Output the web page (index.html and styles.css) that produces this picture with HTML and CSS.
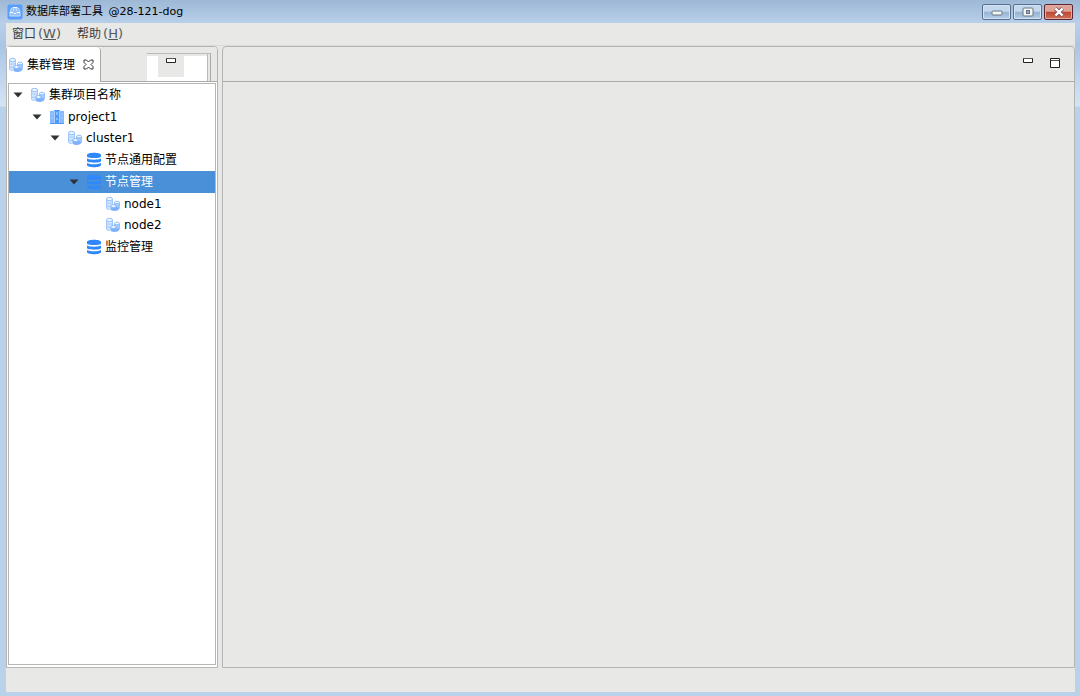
FILE: index.html
```
<!DOCTYPE html>
<html lang="zh-CN">
  <head>
    <meta charset="UTF-8">
    <meta name="viewport" content="width=device-width, initial-scale=1.0">
    <title>数据库部署工具</title>
    <link rel="stylesheet" href="styles.css">
  </head>
  <body>
    <!-- shared icons -->
    <svg class="sprite" aria-hidden="true">
      <symbol id="icon-cluster" viewBox="0 0 16 16">
        <path d="M1 3v9c0 1 1.500 1.800 3.500 1.800S8 13 8 12V3z" fill="#d3e5fe"/>
        <path d="M1.500 3v9c0 .8 1.200 1.400 3 1.400M7.500 3v5M1.500 6c0 1.600 6 1.600 6 0M1.500 9c0 1.200 2 1.600 4 1.400" fill="none" stroke="#a3c9fc"/>
        <ellipse cx="4.500" cy="3" rx="3" ry="1.700" fill="#eef5ff" stroke="#93bffb"/>
        <path d="M9.500 6.500V12c1 1.500 5 1.500 5-.5v-5z" fill="#a5cafd" stroke="#93bffb"/>
        <ellipse cx="12" cy="6.500" rx="2.500" ry="1.300" fill="#eef5ff" stroke="#93bffb"/>
        <path d="M5.500 10v3c0 1.300 1.600 2 4 2 2.600 0 4.600-1 5-3l-2-1z" fill="#7db1fb"/>
        <ellipse cx="8.500" cy="10" rx="2.800" ry="1.500" fill="#eef5ff" stroke="#86b7fb"/>
      </symbol>
      <symbol id="icon-project" viewBox="0 0 16 16">
        <path d="M1 2h14v13H1z" fill="#86bafc"/>
        <path d="M5 1h6v14H5z" fill="#4f9bfb"/>
        <path d="M5.500 2v12M10.500 2v12M3 4v2M3 8v2M13 4v2M13 8v2" stroke="#a9cffe" fill="none"/>
        <path d="M8 3v3M8 9v2" stroke="#c9e0ff" fill="none"/>
        <path d="M1 14.500h14" stroke="#4f9bfb"/>
      </symbol>
      <symbol id="icon-db" viewBox="0 0 16 16">
        <path d="M1 3c0-3 14-3 14 0v1.500c0 2-14 2-14 0zM1 6.500c3 1.600 11 1.600 14 0V9c0 2.200-14 2.200-14 0zM1 11c3 1.800 11 1.800 14 0v2c0 3-14 3-14 0z" fill="#2f89fc"/>
      </symbol>
      <symbol id="icon-arrow" viewBox="0 0 10 6">
        <path d="M.5.5h9L5 5.500z" fill="#2e3436"/>
      </symbol>
      <symbol id="icon-min" viewBox="0 0 10 5">
        <path d="M.5.500h9v4h-9z" fill="#fff" stroke="#222"/>
        <path d="M0 .500h10" stroke="#555"/>
      </symbol>
    </svg>

    <div class="window">
      <header class="titlebar">
        <svg class="app-icon" viewBox="0 0 16 16">
          <rect x="0.500" y="0.500" width="15" height="15" rx="2" fill="#5a9efb"/>
          <path d="M4.500 4L3 8v4h10V8l-1.500-4z" fill="#8fc0ff" stroke="#c5defe"/>
          <path d="M6 3.500h4M6 6h1M9 6h1M3 8.500h3l1 1h2l1-1h3" stroke="#fff" fill="none"/>
        </svg>
        <h1 class="title">数据库部署工具 <span class="host">@28-121-dog</span></h1>
        <div class="win-buttons">
          <button class="win-btn" aria-label="最小化">
            <svg class="low" width="12" height="6" viewBox="0 0 12 6"><rect x="1" y="1" width="10" height="4" rx="1" fill="#f4f4f2" stroke="#6b7884"/></svg>
          </button>
          <button class="win-btn" aria-label="最大化">
            <svg width="12" height="10" viewBox="0 0 12 10"><rect x="1" y="1" width="10" height="8" rx="1" fill="#f4f4f2" stroke="#6b7884"/><rect x="4.500" y="3.500" width="3" height="3" fill="#8eabc9" stroke="#6b7884"/></svg>
          </button>
          <button class="win-btn close" aria-label="关闭">
            <svg width="12" height="10" viewBox="0 0 12 10"><path d="M2.500 1.500l7 7M9.500 1.500l-7 7" stroke="#7d5360" stroke-width="4"/><path d="M2.500 1.500l7 7M9.500 1.500l-7 7" stroke="#fff" stroke-width="2.400"/></svg>
          </button>
        </div>
      </header>

      <nav class="menubar">
        <button class="menu">窗口<span class="key">(<u>W</u>)</span></button>
        <button class="menu">帮助<span class="key">(<u>H</u>)</span></button>
      </nav>

      <main class="workbench">
        <section class="view explorer">
          <div class="view-head">
            <div class="tab">
              <svg class="icon"><use href="#icon-cluster"/></svg>
              <span>集群管理</span>
              <button class="tab-close" aria-label="关闭">
                <svg width="11" height="11" viewBox="0 0 11 11"><path d="M1 1h2.500l2 2 2-2H10v2.500l-2 2 2 2V10H7.500l-2-2-2 2H1V7.500l2-2-2-2z" fill="#fff" stroke="#333"/></svg>
              </button>
            </div>
            <div class="tab-rest">
              <div class="tools">
                <button class="tool" aria-label="最小化"><svg width="10" height="5"><use href="#icon-min"/></svg></button>
              </div>
            </div>
          </div>
          <div class="tree-box">
            <ul class="tree">
              <li class="row"><svg class="arrow"><use href="#icon-arrow"/></svg><svg class="icon"><use href="#icon-cluster"/></svg><span>集群项目名称</span></li>
              <li class="row level-1"><svg class="arrow"><use href="#icon-arrow"/></svg><svg class="icon"><use href="#icon-project"/></svg><span>project1</span></li>
              <li class="row level-2"><svg class="arrow"><use href="#icon-arrow"/></svg><svg class="icon"><use href="#icon-cluster"/></svg><span>cluster1</span></li>
              <li class="row level-3"><span class="arrow"></span><svg class="icon"><use href="#icon-db"/></svg><span>节点通用配置</span></li>
              <li class="row level-3 selected"><svg class="arrow"><use href="#icon-arrow"/></svg><svg class="icon"><use href="#icon-db"/></svg><span>节点管理</span></li>
              <li class="row level-4"><span class="arrow"></span><svg class="icon"><use href="#icon-cluster"/></svg><span>node1</span></li>
              <li class="row level-4"><span class="arrow"></span><svg class="icon"><use href="#icon-cluster"/></svg><span>node2</span></li>
              <li class="row level-3"><span class="arrow"></span><svg class="icon"><use href="#icon-db"/></svg><span>监控管理</span></li>
            </ul>
          </div>
        </section>

        <section class="view editor">
          <div class="view-head editor-head">
            <button class="tool-plain" aria-label="最小化"><svg width="10" height="5"><use href="#icon-min"/></svg></button>
            <button class="tool-plain" aria-label="最大化"><svg width="10" height="10" viewBox="0 0 10 10"><path d="M.5.500h9v9h-9z" fill="#fff" stroke="#222"/><path d="M1 2.500h8" stroke="#555"/></svg></button>
          </div>
        </section>
      </main>

      <footer class="statusbar"></footer>
    </div>
  </body>
</html>
```
FILE: styles.css
```
* {
    box-sizing: border-box;
}

body {
    margin: 0;
    font-family: "DejaVu Sans", "Noto Sans CJK SC", sans-serif;
    font-size: 12px;
    line-height: 16px;
    color: #000;
}

button {
    display: flex;
    align-items: center;
    justify-content: center;
    padding: 0;
    border: none;
    background: none;
    font: inherit;
    color: inherit;
}

svg {
    display: block;
}

.sprite {
    display: none;
}

.window {
    display: flex;
    flex-direction: column;
    height: 100vh;
    padding: 0 5px 4px 6px;
    background: linear-gradient(#9db8d5 0, #b8cfe9 23px, #a9c5e5 46px, #d5e4f5 106px, #bad1ea 107px);
}

.titlebar {
    display: flex;
    align-items: center;
    height: 23px;
    flex: none;
    padding: 0 2px 0 1px;
}

.app-icon {
    width: 16px;
    height: 16px;
}

.title {
    margin: 0 auto 0 3px;
    font-size: 11px;
    font-weight: normal;
}

.host {
    margin-left: 2px;
}

.win-buttons {
    display: flex;
    gap: 2px;
}

.win-btn {
    width: 29px;
    height: 16px;
    border: 1px solid #566f8e;
    border-radius: 2px;
    background: linear-gradient(#c3d7ed 45%, #97b3d2 50%, #b5cde8);
    box-shadow: inset 0 0 0 1px #d4e3f3;
}

.win-btn.close {
    border-color: #5d2635;
    background: linear-gradient(#dfa498 45%, #bd4531 50%, #d0735a);
    box-shadow: inset 0 0 0 1px #e2aaa0;
}

.low {
    margin-top: 3px;
}

.menubar {
    display: flex;
    flex: none;
    gap: 16px;
    height: 23px;
    padding: 0 6px;
    background: #e8e8e6;
    border-bottom: 1px solid #d9d9d7;
    color: #3a3d3e;
}

.key {
    margin-left: 2px;
    font-size: 13px;
    color: #55585a;
}

.workbench {
    display: flex;
    flex: 1;
    gap: 4px;
    min-height: 0;
    background: #e8e8e6;
}

.view {
    display: flex;
    flex-direction: column;
    border: 1px solid #b4b4b2;
    border-radius: 4px 4px 0 0;
}

.explorer {
    width: 212px;
    flex: none;
    background: #fff;
}

.editor {
    flex: 1;
}

.view-head {
    display: flex;
    flex: none;
    height: 35px;
}

.tab {
    display: flex;
    align-items: center;
    width: 94px;
    padding-left: 1px;
    gap: 3px;
    border-right: 1px solid #aaa;
    border-radius: 0 4px 0 0;
    background: #fff;
}

.tab-close {
    margin-left: 5px;
}

.tab-rest {
    display: flex;
    flex: 1;
    justify-content: flex-end;
    padding: 6px 6px 0 0;
    background: #e8e8e6;
    border-bottom: 1px solid #aaa;
    border-radius: 0 4px 0 0;
}

/* toolbar sits on a white strip with a raised grey button */
.tools {
    width: 64px;
    padding-left: 11px;
    background: linear-gradient(#e8e8e6 2px, #fff 2px);
    border-top: 1px solid #bbb;
    border-right: 1px solid #aaa;
    box-shadow: inset -2px 0 #e8e8e6, inset -3px 0 #bbb;
}

.tool {
    width: 26px;
    height: 23px;
    padding-bottom: 10px;
    background: #e8e8e6;
}

.tree-box {
    flex: 1;
    margin: 1px 1px 2px;
    border: 1px solid #b6b6b4;
    background: #fff;
}

.tree {
    display: grid;
    grid-auto-rows: 1fr;
    height: 174px;
    margin: 0;
    padding: 0;
    list-style: none;
}

.row {
    display: flex;
    align-items: center;
    gap: 3px;
    padding-left: 4px;
}

.level-1 {
    padding-left: 23px;
}

.level-2 {
    padding-left: 41px;
}

.level-3 {
    padding-left: 60px;
}

.level-4 {
    padding-left: 79px;
}

.selected {
    background: #4a90d9;
    color: #fff;
}

.icon {
    width: 16px;
    height: 16px;
    flex: none;
}

.arrow {
    width: 10px;
    height: 6px;
    margin-right: 4px;
    flex: none;
}

.editor-head {
    justify-content: flex-end;
    align-items: center;
    gap: 17px;
    padding: 0 14px 2px 0;
    border-bottom: 1px solid #aaa;
}

.tool-plain {
    width: 10px;
    height: 10px;
}

.tool-plain:first-child {
    align-items: flex-start;
}

.statusbar {
    flex: none;
    height: 24px;
    background: #e8e8e6;
}
```
